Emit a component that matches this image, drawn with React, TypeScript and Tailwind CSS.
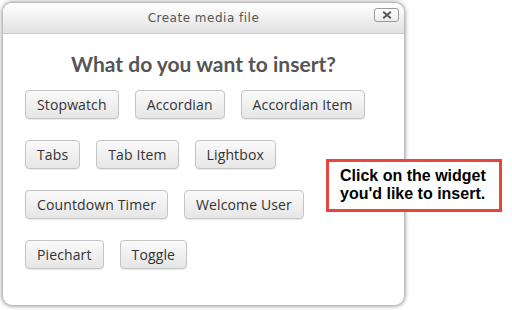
import React from "react";

const rows: string[][] = [
  ["Stopwatch", "Accordian", "Accordian Item"],
  ["Tabs", "Tab Item", "Lightbox"],
  ["Countdown Timer", "Welcome User"],
  ["Piechart", "Toggle"],
];

export default function App() {
  return (
    <div className="relative w-[512px] h-[310px] bg-white overflow-hidden">
      <div className="absolute left-[3px] top-[3px] w-[401px] h-[302px] bg-white rounded-[9px] shadow-[0_0_4px_1px_rgba(0,0,0,0.45)] flex flex-col overflow-hidden">
        <div className="relative h-[31px] shrink-0 bg-gradient-to-b from-white to-[#e2e2e2] border-b border-[#c8c8c8] flex items-center justify-center">
          <span className="text-[12px] text-[#555] tracking-[0.5px]" style={{ fontFamily: '"DejaVu Sans", sans-serif' }}>
            Create media file
          </span>
          <div className="absolute right-[5px] top-[5px] w-[25px] h-[14px] rounded-[3px] border border-[#9a9a9a] bg-gradient-to-b from-white to-[#ededed] flex items-center justify-center">
            <svg width="10" height="8" viewBox="0 0 10 8">
              <path d="M1.2 0.8 L8.8 7.2 M8.8 0.8 L1.2 7.2" stroke="#5a5a5a" strokeWidth="2.1" />
            </svg>
          </div>
        </div>
        <div className="flex flex-col pl-[22px]">
          <h1
            className="text-center text-[21px] font-bold text-[#555] leading-[28px] mt-[16px] pr-[22px]"
            style={{ fontFamily: 'Lato, "Open Sans", sans-serif' }}
          >
            What do you want to insert?
          </h1>
          <div className="flex flex-col gap-[21px] mt-[12px]">
            {rows.map((row, i) => (
              <div key={i} className="flex gap-[16px]">
                {row.map((b) => (
                  <button
                    key={b}
                    className="h-[29px] px-[11px] rounded-[4px] border border-[#c4c4c4] bg-gradient-to-b from-[#fafafa] to-[#e6e6e6] text-[14px] text-[#333] leading-[19px] tracking-[0.12px] shadow-[0_1px_1px_rgba(0,0,0,0.08)]"
                    style={{ fontFamily: '"Open Sans", sans-serif' }}
                  >
                    {b}
                  </button>
                ))}
              </div>
            ))}
          </div>
        </div>
      </div>
      <div
        className="absolute left-[326px] top-[159px] w-[176px] h-[53px] border-[3px] border-[#e8463d] bg-white pl-[11px] pt-[5px] text-[16px] font-bold leading-[18px] text-black"
        style={{ fontFamily: '"Liberation Sans", Arial, sans-serif' }}
      >
        Click on the widget
        <br />
        you'd like to insert.
      </div>
    </div>
  );
}
